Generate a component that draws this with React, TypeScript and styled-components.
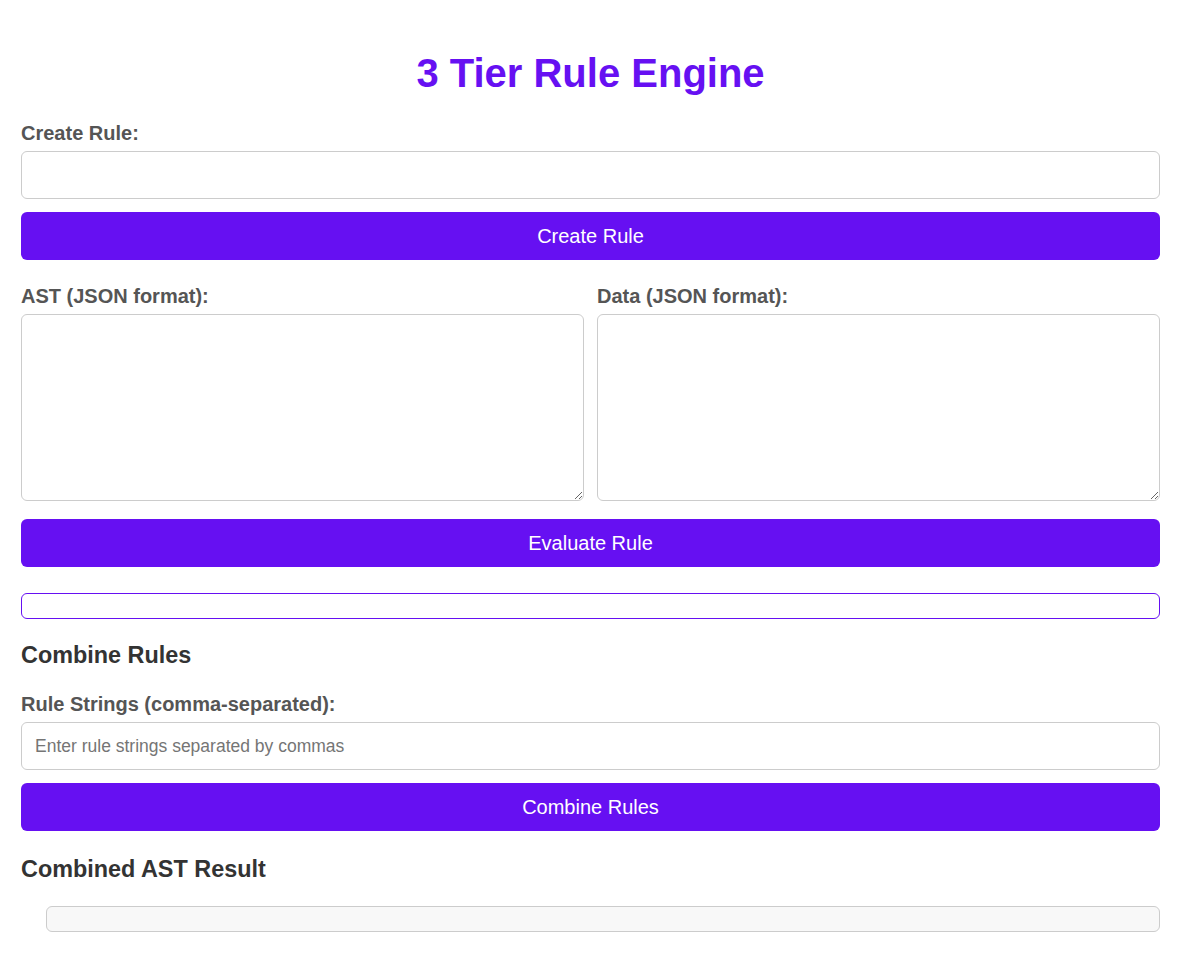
import styled, { createGlobalStyle } from "styled-components";

const purple = "#6610f2";

const GlobalStyle = createGlobalStyle`
  body {
    margin: 0;
    background: #ffffff;
    font-family: "Liberation Sans", Arial, sans-serif;
  }
  * {
    box-sizing: border-box;
  }
`;

const Page = styled.div`
  padding: 50px 18px 22px 21px;
`;

const Title = styled.h1`
  margin: 0 0 26px;
  font-size: 40px;
  line-height: 46px;
  font-weight: 700;
  text-align: center;
  color: ${purple};
`;

const Label = styled.label`
  display: block;
  margin: 0 0 6px;
  font-size: 20px;
  line-height: 23px;
  font-weight: 700;
  color: #555555;
`;

const TextInput = styled.input`
  display: block;
  width: 100%;
  height: 48px;
  padding: 0 13px;
  border: 1px solid #cccccc;
  border-radius: 6px;
  font-family: "Liberation Sans", Arial, sans-serif;
  font-size: 17.5px;
  color: #333333;
  outline: none;

  &::placeholder {
    color: #757575;
  }
`;

const Button = styled.button<{ $top: number }>`
  display: block;
  width: 100%;
  height: 48px;
  margin-top: ${(p) => p.$top}px;
  border: none;
  border-radius: 6px;
  background: ${purple};
  color: #ffffff;
  font-family: "Liberation Sans", Arial, sans-serif;
  font-size: 20px;
  cursor: pointer;
`;

const Columns = styled.div`
  display: grid;
  grid-template-columns: 1fr 1fr;
  gap: 13px;
  margin-top: 25px;
`;

const Field = styled.div`
  display: flex;
  flex-direction: column;
`;

const JsonArea = styled.textarea`
  display: block;
  width: 100%;
  height: 187px;
  padding: 12px;
  border: 1px solid #cccccc;
  border-radius: 6px;
  font-family: "Liberation Mono", monospace;
  font-size: 15px;
  outline: none;
`;

const ResultBox = styled.div`
  margin-top: 26px;
  height: 26px;
  border: 1px solid ${purple};
  border-radius: 6px;
`;

const SectionTitle = styled.h3<{ $top: number }>`
  margin: ${(p) => p.$top}px 0 0;
  font-size: 23.4px;
  line-height: 27px;
  font-weight: 700;
  color: #333333;
`;

const FieldGroup = styled.div`
  margin-top: 24px;
`;

const AstOutput = styled.pre`
  margin: 23px 0 0 25px;
  height: 26px;
  padding: 12px;
  border: 1px solid #cccccc;
  border-radius: 6px;
  background: #f8f8f8;
  font-family: "Liberation Mono", monospace;
  font-size: 15px;
`;

export default function App() {
  return (
    <>
      <GlobalStyle />
      <Page>
        <Title>3 Tier Rule Engine</Title>

        <Label htmlFor="rule">Create Rule:</Label>
        <TextInput id="rule" type="text" />
        <Button $top={13}>Create Rule</Button>

        <Columns>
          <Field>
            <Label htmlFor="ast">AST (JSON format):</Label>
            <JsonArea id="ast" />
          </Field>
          <Field>
            <Label htmlFor="data">Data (JSON format):</Label>
            <JsonArea id="data" />
          </Field>
        </Columns>
        <Button $top={18}>Evaluate Rule</Button>

        <ResultBox />

        <SectionTitle $top={23}>Combine Rules</SectionTitle>
        <FieldGroup>
          <Label htmlFor="rules">Rule Strings (comma-separated):</Label>
          <TextInput id="rules" type="text" placeholder="Enter rule strings separated by commas" />
        </FieldGroup>
        <Button $top={13}>Combine Rules</Button>

        <SectionTitle $top={25}>Combined AST Result</SectionTitle>
        <AstOutput />
      </Page>
    </>
  );
}
